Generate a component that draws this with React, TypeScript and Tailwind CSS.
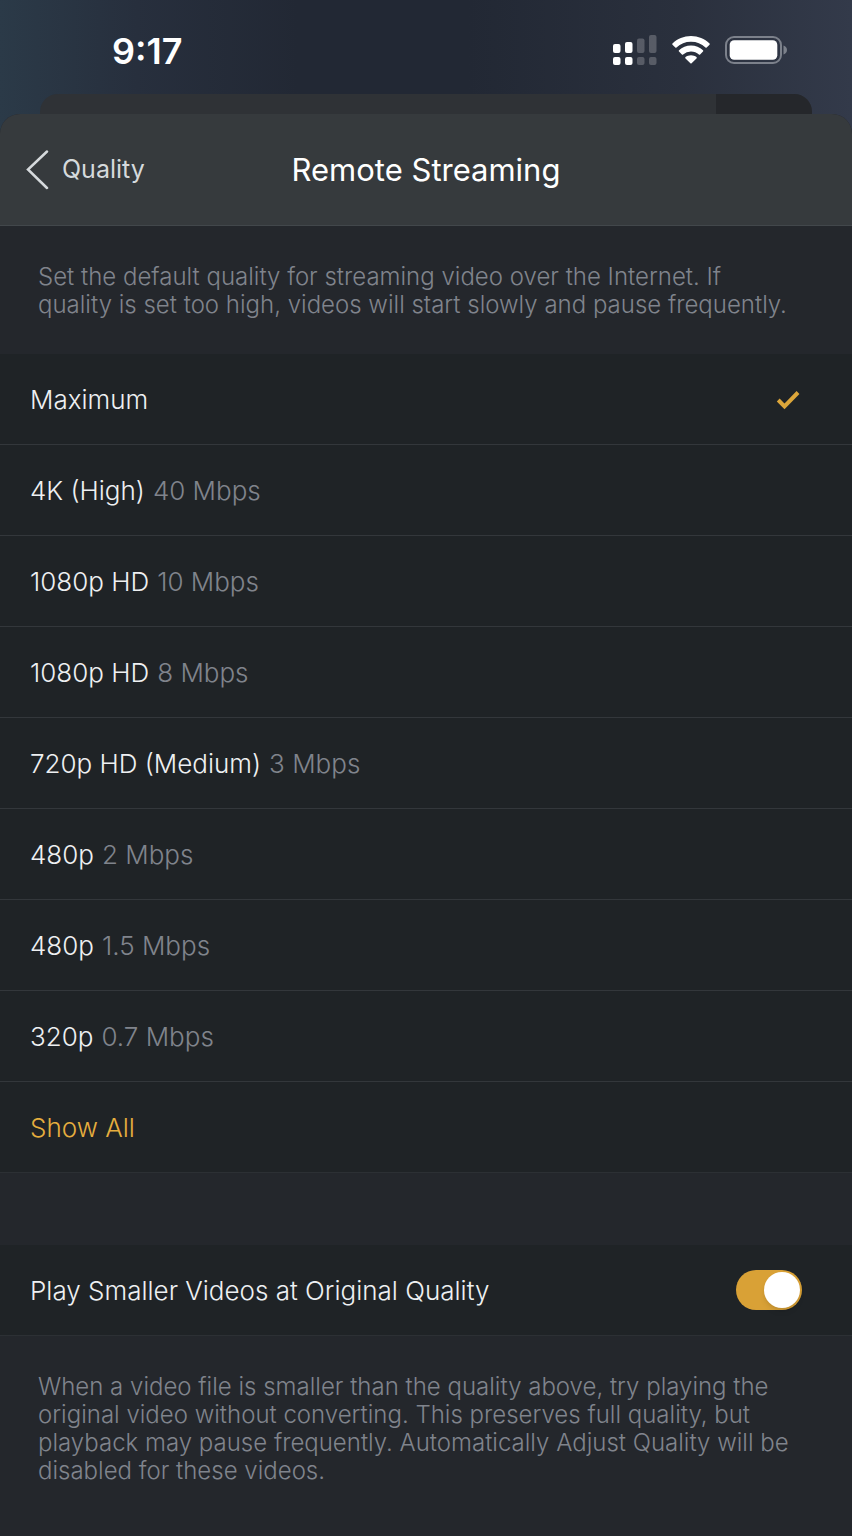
import { useState } from 'react'

interface QualityOption {
  id: string
  label: string
  bitrate?: string
}

const options: QualityOption[] = [
  { id: 'max', label: 'Maximum' },
  { id: '4k-40', label: '4K (High)', bitrate: '40 Mbps' },
  { id: '1080-10', label: '1080p HD', bitrate: '10 Mbps' },
  { id: '1080-8', label: '1080p HD', bitrate: '8 Mbps' },
  { id: '720-3', label: '720p HD (Medium)', bitrate: '3 Mbps' },
  { id: '480-2', label: '480p', bitrate: '2 Mbps' },
  { id: '480-1', label: '480p', bitrate: '1.5 Mbps' },
  { id: '320', label: '320p', bitrate: '0.7 Mbps' },
]

function StatusBar() {
  return (
    <div className="flex h-[94px] items-center justify-between pr-16 pl-28 text-white">
      <span className="pt-2 text-4xl font-semibold">9:17</span>
      <div className="flex items-center gap-[15px] pt-1.5">
        {/* Dual SIM signal */}
        <svg className="h-[30px] w-[44px]" viewBox="0 0 44 30" fill="currentColor">
          <rect x="0" y="9" width="7.5" height="9" rx="2" />
          <rect x="12" y="7" width="7.5" height="11" rx="2" />
          <rect x="24" y="3.5" width="7.5" height="14.5" rx="2" opacity="0.22" />
          <rect x="36" y="0" width="7.5" height="18" rx="2" opacity="0.22" />
          <rect x="0" y="22" width="7.5" height="8" rx="2" />
          <rect x="12" y="22" width="7.5" height="8" rx="2" />
          <rect x="24" y="22" width="7.5" height="8" rx="2" opacity="0.22" />
          <rect x="36" y="22" width="7.5" height="8" rx="2" opacity="0.22" />
        </svg>
        {/* Wifi */}
        <svg className="h-7 w-[38px]" viewBox="0 0 38 28" fill="currentColor">
          <path d="M19 0C11.8 0 5.3 2.8.5 7.400a.9.9 0 0 0 0 1.300l2.800 2.800a.9.9 0 0 0 1.200 0A21 21 0 0 1 19 5.800a21 21 0 0 1 14.500 5.700.9.9 0 0 0 1.200 0l2.800-2.800a.9.9 0 0 0 0-1.300C32.700 2.800 26.200 0 19 0Z" />
          <path d="M19 9.600c-4.600 0-8.800 1.800-12 4.700a.9.9 0 0 0 0 1.300l2.900 2.800a.9.9 0 0 0 1.200 0A11.700 11.700 0 0 1 19 15.400c3 0 5.800 1.100 7.900 3a.9.9 0 0 0 1.200 0l2.900-2.800a.9.9 0 0 0 0-1.300c-3.200-2.900-7.400-4.700-12-4.700Z" />
          <path d="M19 19.200c-2.100 0-4 .7-5.500 1.900a.9.9 0 0 0 0 1.300l4.900 4.900a.9.9 0 0 0 1.200 0l4.900-4.900a.9.9 0 0 0 0-1.300c-1.500-1.200-3.400-1.900-5.500-1.900Z" />
        </svg>
        {/* Battery */}
        <svg className="h-7 w-[63px]" viewBox="0 0 63 28" fill="none">
          <rect x="1" y="1" width="55" height="26" rx="8" stroke="#7c818b" strokeWidth="2" />
          <rect x="4.7" y="4.2" width="47.6" height="19.6" rx="4.5" fill="#fff" />
          <path d="M58.500 9.500c2.200.7 3.500 2.400 3.500 4.500s-1.300 3.800-3.500 4.500Z" fill="#7c818b" />
        </svg>
      </div>
    </div>
  )
}

function CheckIcon() {
  return (
    <svg
      className="h-6 w-6"
      viewBox="0 0 24 24"
      fill="none"
      stroke="currentColor"
      strokeWidth="4"
    >
      <path d="M2.200 13 8.500 19.300 22 5.500" />
    </svg>
  )
}

export default function App() {
  const [selected, setSelected] = useState('max')
  const [playOriginal, setPlayOriginal] = useState(true)

  return (
    <div className="flex min-h-screen flex-col bg-[linear-gradient(90deg,#2b3a48_0%,#272f3d_16%,#222834_35%,#222834_55%,#2a303d_80%,#333a4a_100%)] font-['Inter','Liberation_Sans',sans-serif]">
      <StatusBar />

      {/* Card stacked behind the sheet */}
      <div className="mx-10 flex h-5 overflow-hidden rounded-t-[18px] bg-[#2f3236]">
        <div className="flex-1" />
        <div className="w-24 bg-[#25272b]" />
      </div>

      <main className="flex flex-1 flex-col overflow-hidden rounded-t-[20px] bg-[#24272c]">
        <header className="grid h-28 grid-cols-[1fr_auto_1fr] items-center border-b border-[#42474b] bg-[#363a3d] px-6">
          <button className="flex items-center gap-3 justify-self-start text-[25px] text-[#d5d9dc]">
            <svg
              className="h-10 w-[26px]"
              viewBox="0 0 26 40"
              fill="none"
              stroke="currentColor"
              strokeWidth="2.5"
              strokeLinecap="round"
            >
              <path d="M23 1.500 4 19.500 23 38" />
            </svg>
            Quality
          </button>
          <h1 className="pt-0.5 text-[31px] text-white">Remote Streaming</h1>
        </header>

        <p className="pt-[37px] pr-[52px] pb-[35px] pl-[38px] text-2xl leading-7 font-light text-[#80848c]">
          Set the default quality for streaming video over the Internet. If quality is set too high,
          videos will start slowly and pause frequently.
        </p>

        <div role="radiogroup" aria-label="Remote Streaming" className="bg-[#1f2326]">
          {options.map((option) => (
            <label
              key={option.id}
              className="flex h-[91px] cursor-pointer items-center gap-2 border-b border-[#33373b] pr-[52px] pl-[30px] text-[26px] font-light text-[#eef0f2]"
            >
              <input
                type="radio"
                name="quality"
                className="sr-only"
                checked={selected === option.id}
                onChange={() => setSelected(option.id)}
              />
              <span>{option.label}</span>
              {option.bitrate && <span className="text-[#80848c]">{option.bitrate}</span>}
              {selected === option.id && (
                <span className="ml-auto text-[#dca63a]">
                  <CheckIcon />
                </span>
              )}
            </label>
          ))}
          <button className="flex h-[91px] w-full items-center border-b border-[#2c3034] px-[30px] text-[26px] font-light text-[#e6ae3e]">
            Show All
          </button>
        </div>

        <div className="mt-[72px] flex h-[91px] items-center justify-between border-b border-[#2c3034] bg-[#1f2326] pr-[50px] pl-[30px]">
          <label htmlFor="play-original" className="text-[26px] font-light text-[#eef0f2]">
            Play Smaller Videos at Original Quality
          </label>
          <input
            id="play-original"
            type="checkbox"
            role="switch"
            checked={playOriginal}
            onChange={(e) => setPlayOriginal(e.target.checked)}
            className="flex h-10 w-[66px] cursor-pointer appearance-none items-center rounded-full bg-[#4a4e53] px-0.5 before:h-9 before:w-9 before:rounded-full before:bg-white before:shadow-md checked:justify-end checked:bg-[#d9a136]"
          />
        </div>

        <p className="pt-[37px] pr-[52px] pb-[35px] pl-[38px] text-2xl leading-7 font-light text-[#80848c]">
          When a video file is smaller than the quality above, try playing the original video
          without converting. This preserves full quality, but playback may pause frequently.
          Automatically Adjust Quality will be disabled for these videos.
        </p>
      </main>
    </div>
  )
}
